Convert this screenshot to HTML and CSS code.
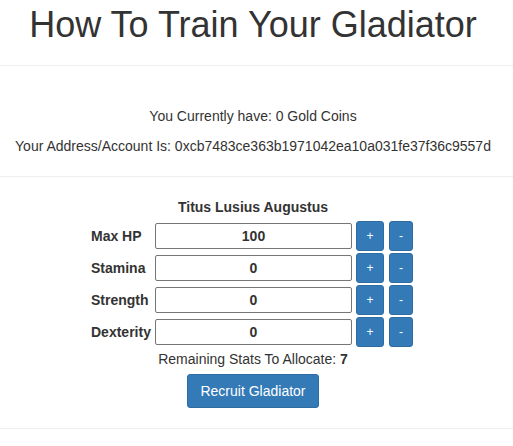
FILE: index.html
```html
<!DOCTYPE html>
<html lang="en">
<head>
<meta charset="utf-8">
<title>How To Train Your Gladiator</title>
<link rel="stylesheet" href="styles.css">
</head>
<body>
<div class="page">
  <h1 class="title">How To Train Your Gladiator</h1>
  <hr class="rule">
  <section class="account">
    <p class="line">You Currently have: 0 Gold Coins</p>
    <p class="line">Your Address/Account Is: 0xcb7483ce363b1971042ea10a031fe37f36c9557d</p>
  </section>
  <hr class="rule">
  <section class="recruit">
    <div class="name">Titus Lusius Augustus</div>
    <div class="stats">
      <div class="label">Max HP</div>
      <input class="stat-input" type="text" value="100">
      <button class="btn btn-sm">+</button>
      <button class="btn btn-sm minus">-</button>

      <div class="label">Stamina</div>
      <input class="stat-input" type="text" value="0">
      <button class="btn btn-sm">+</button>
      <button class="btn btn-sm minus">-</button>

      <div class="label">Strength</div>
      <input class="stat-input" type="text" value="0">
      <button class="btn btn-sm">+</button>
      <button class="btn btn-sm minus">-</button>

      <div class="label">Dexterity</div>
      <input class="stat-input" type="text" value="0">
      <button class="btn btn-sm">+</button>
      <button class="btn btn-sm minus">-</button>
    </div>
    <div class="remaining">Remaining Stats To Allocate: <b>7</b></div>
    <button class="btn btn-recruit">Recruit Gladiator</button>
  </section>
  <hr class="rule">
</div>
</body>
</html>
```

FILE: styles.css
```css
* { box-sizing: border-box; }
html, body { margin: 0; padding: 0; background: #fff; }
body {
  font-family: "Liberation Sans", Arial, Helvetica, sans-serif;
  font-size: 14px;
  line-height: 20px;
  color: #333;
}
.page { width: 513px; }
.title {
  margin: 5px 7px 20px 0;
  font-size: 36px;
  font-weight: 500;
  line-height: 1.1;
  text-align: center;
  color: #333;
}
.rule {
  margin: 20px 0;
  border: 0;
  border-top: 1px solid #eee;
  height: 0;
}
.account {
  padding-top: 20px;
  padding-right: 7px;
  text-align: center;
}
.line { margin: 0 0 10px; }
.recruit {
  padding-right: 7px;
  display: flex;
  flex-direction: column;
  align-items: center;
}
.name { font-weight: bold; height: 20px; }
.stats {
  margin-top: 4px;
  margin-right: 2px;
  display: grid;
  grid-template-columns: 60px 197px 28px 25px;
  grid-auto-rows: 30px;
  column-gap: 4px;
  row-gap: 2px;
  align-items: center;
}
.label { font-weight: bold; white-space: nowrap; }
.stat-input {
  width: 197px;
  height: 26px;
  border: 1px solid #767676;
  border-radius: 2px;
  padding: 0 4px;
  font-family: inherit;
  font-size: 14px;
  font-weight: bold;
  color: #333;
  text-align: center;
  background: #fff;
}
.btn {
  font-family: inherit;
  color: #fff;
  background: #337ab7;
  border: 1px solid #2e6da4;
  border-radius: 3px;
  padding: 0;
  cursor: pointer;
}
.btn-sm {
  height: 30px;
  font-size: 12px;
  line-height: 18px;
}
.minus { margin-left: 1px; width: 24px; }
.remaining { margin-top: 2px; height: 20px; }
.btn-recruit {
  margin-top: 5px;
  height: 34px;
  padding: 6px 12px;
  font-size: 14px;
  line-height: 20px;
}
```
